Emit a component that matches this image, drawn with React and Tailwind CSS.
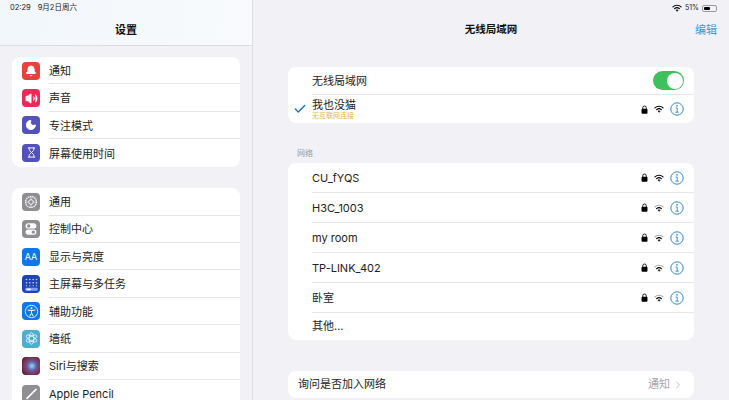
import { Bell, Volume2, Moon, Hourglass, Check, ChevronRight } from 'lucide-react'

const font = "font-['Inter','Noto_Sans_CJK_SC',sans-serif]"

function Wifi({ dim = false }) {
  return (
    <svg viewBox="0 0 16 12" className="w-[10px] h-[8px] text-black" fill="none" stroke="currentColor" strokeLinecap="round">
      <path d="M1.5 4.2a9.5 9.5 0 0 1 13 0" strokeWidth="1.9" opacity={dim ? 0.35 : 1} />
      <path d="M4.2 7a5.6 5.6 0 0 1 7.6 0" strokeWidth="1.9" />
      <path d="M8 11.2 6.3 9.4a2.4 2.4 0 0 1 3.4 0Z" fill="currentColor" strokeWidth="0.6" />
    </svg>
  )
}

function LockIcon() {
  return (
    <svg viewBox="0 0 8 10" className="w-[7px] h-[9px]">
      <path d="M2 4.5V3a2 2 0 0 1 4 0v1.5" fill="none" stroke="black" strokeWidth="1" />
      <rect x="0.6" y="4.2" width="6.8" height="5.6" rx="1" fill="black" />
    </svg>
  )
}

function InfoIcon() {
  return (
    <svg viewBox="0 0 14 14" className="w-[14px] h-[14px]" fill="none" stroke="#2f88c8">
      <circle cx="7" cy="7" r="6.2" strokeWidth="1" />
      <circle cx="7" cy="3.9" r="0.8" fill="#2f88c8" stroke="none" />
      <path d="M5.6 6h1.6v4M5.4 10.2h3.4" strokeWidth="0.9" />
    </svg>
  )
}

function GearIcon() {
  return (
    <svg viewBox="0 0 18 18" className="w-[14px] h-[14px]" fill="none" stroke="white">
      <circle cx="9" cy="9" r="7" strokeWidth="1.6" strokeDasharray="2 0.8" />
      <circle cx="9" cy="9" r="3" strokeWidth="1.2" />
      <path d="M9 2.5V6M9 12v3.5M2.5 9H6M12 9h3.5" strokeWidth="0.8" />
    </svg>
  )
}

function ToggleIcon() {
  return (
    <svg viewBox="0 0 18 18" className="w-[14px] h-[14px]">
      <rect x="2" y="1.5" width="14" height="7" rx="3.5" fill="white" />
      <circle cx="6" cy="5" r="2.2" fill="#8e8e93" />
      <rect x="2" y="9.5" width="14" height="7" rx="3.5" fill="white" />
      <circle cx="12" cy="13" r="2.2" fill="#8e8e93" />
    </svg>
  )
}

function GridIcon() {
  return (
    <svg viewBox="0 0 18 18" className="w-[15px] h-[15px]" fill="#c7d6fb">
      {[3, 7, 11, 15].map((x) => [3, 7].map((y) => <circle key={`${x}-${y}`} cx={x} cy={y} r="1" />))}
      {[3, 7, 11, 15].map((x) => <circle key={x} cx={x} cy="10.5" r="0.9" opacity="0.7" />)}
      <rect x="1.5" y="13" width="15" height="3.6" rx="1.2" fill="#7f9df0" />
      <rect x="3" y="13.8" width="5" height="2" rx="0.6" fill="white" />
    </svg>
  )
}

function AccessIcon() {
  return (
    <svg viewBox="0 0 18 18" className="w-[15px] h-[15px]" fill="none" stroke="white">
      <circle cx="9" cy="9" r="7.5" strokeWidth="1" />
      <circle cx="9" cy="5" r="1.2" fill="white" stroke="none" />
      <path d="M4.8 7.2 9 8l4.2-.8M9 8v3l-2 3.4M9 11l2 3.4" strokeWidth="1.2" strokeLinecap="round" />
    </svg>
  )
}

function FlowerIcon() {
  return (
    <svg viewBox="0 0 18 18" className="w-[15px] h-[15px]" fill="none" stroke="white" strokeWidth="0.9">
      <ellipse cx="9" cy="9" rx="2.8" ry="7" />
      <ellipse cx="9" cy="9" rx="2.8" ry="7" transform="rotate(60 9 9)" />
      <ellipse cx="9" cy="9" rx="2.8" ry="7" transform="rotate(120 9 9)" />
    </svg>
  )
}

function PencilIcon() {
  return (
    <svg viewBox="0 0 18 18" className="w-[15px] h-[15px]" fill="none" stroke="white" strokeWidth="2">
      <path d="M3 15.5 15 3.5" />
    </svg>
  )
}

const group1 = [
  { name: '通知', bg: 'bg-[#e8403a]', icon: <Bell className="w-[12px] h-[12px] text-white" fill="white" /> },
  { name: '声音', bg: 'bg-[#ea2a57]', icon: <Volume2 className="w-[13px] h-[13px] text-white" fill="white" /> },
  { name: '专注模式', bg: 'bg-[#5352bd]', icon: <Moon className="w-[12px] h-[12px] text-white" fill="white" /> },
  { name: '屏幕使用时间', bg: 'bg-[#5352bd]', icon: <Hourglass className="w-[11px] h-[11px] text-white" /> },
]

const group2 = [
  { name: '通用', bg: 'bg-[#8e8e93]', icon: <GearIcon /> },
  { name: '控制中心', bg: 'bg-[#8e8e93]', icon: <ToggleIcon /> },
  { name: '显示与亮度', bg: 'bg-[#0f78e8]', icon: <span className="text-white text-[9px] leading-none">AA</span> },
  { name: '主屏幕与多任务', bg: 'bg-[#1f45b5]', icon: <GridIcon /> },
  { name: '辅助功能', bg: 'bg-[#0f78e8]', icon: <AccessIcon /> },
  { name: '墙纸', bg: 'bg-[#4eaed0]', icon: <FlowerIcon /> },
  { name: 'Siri与搜索', bg: 'bg-[radial-gradient(circle_at_55%_50%,#9fd8ea_0%,#5a5fa8_35%,#8b2f52_62%,#12202a_100%)]', icon: null },
  { name: 'Apple Pencil', bg: 'bg-[#8e8e93]', icon: <PencilIcon /> },
]

function SettingRow({ item, last }) {
  return (
    <div className="flex items-center h-[27.4px] pl-[10px] shrink-0">
      <div className={`w-[18px] h-[18px] rounded-[4px] flex items-center justify-center shrink-0 ${item.bg}`}>
        {item.icon}
      </div>
      <div className={`ml-[9px] flex-1 h-full flex items-center pt-[2px] text-[11px] text-[#222] ${last ? '' : 'border-b border-[#e6e6ea]'}`}>
        <span>{item.name}</span>
      </div>
    </div>
  )
}

function NetIcons({ dim = true }) {
  return (
    <div className="flex items-center">
      <LockIcon />
      <span className="ml-[6px] flex">
        <Wifi dim={dim} />
      </span>
      <span className="ml-[6px] flex">
        <InfoIcon />
      </span>
    </div>
  )
}

function NetworkRow({ name, dim }) {
  return (
    <div className="h-[30px] pl-[24px] shrink-0">
      <div className="h-full flex items-center border-b border-[#e6e6ea] pr-[10px] text-[11px] text-[#222]">
        <span className="flex-1 pt-[1px]">{name}</span>
        <NetIcons dim={dim} />
      </div>
    </div>
  )
}

export default function App() {
  return (
    <div className={`w-[729px] h-[400px] overflow-hidden flex bg-[#f1f1f6] ${font}`}>
      {/* Sidebar */}
      <aside className="w-[253px] shrink-0 h-full flex flex-col border-r border-[#dfdfe3] bg-[#f1f1f6]">
        <header className="h-[46px] shrink-0 border-b border-[#dcdce0] bg-[linear-gradient(100deg,#f2f7fb,#f8fafc)] pl-[10px]">
          <div className="h-[15px] flex items-center text-[7.5px] text-[#222] gap-[7px] pt-[1px]">
            <span>02:29</span>
            <span>9月2日周六</span>
          </div>
          <div className="h-[30px] flex items-center justify-center pr-[10px] text-[11px] font-semibold text-[#111]">设置</div>
        </header>

        <div className="flex-1 overflow-hidden pl-[12px] pr-[12px] pt-[11px] flex flex-col gap-[21.6px]">
          <div className="bg-white rounded-[8px] overflow-hidden shrink-0">
            {group1.map((item, i) => (
              <SettingRow key={item.name} item={item} last={i === group1.length - 1} />
            ))}
          </div>
          <div className="bg-white rounded-[8px] overflow-hidden shrink-0">
            {group2.map((item) => (
              <SettingRow key={item.name} item={item} />
            ))}
          </div>
        </div>
      </aside>

      {/* Detail */}
      <main className="flex-1 min-w-0 h-full flex flex-col">
        <header className="shrink-0 h-[46px] pr-[12px]">
          <div className="h-[15px] flex items-center justify-end gap-[3px] text-[7px] text-[#222] pt-[1px]">
            <Wifi />
            <span>51%</span>
            <div className="w-[15px] h-[7px] rounded-[2px] border border-[#999] p-[1px] flex">
              <div className="w-[6px] bg-black rounded-[1px]" />
            </div>
          </div>
          <div className="h-[30px] relative flex items-center justify-center text-[11px] font-semibold text-[#111]">
            <span className="pl-[12px] text-[10.5px]">无线局域网</span>
            <span className="absolute right-0 font-normal text-[#3d96d6]">编辑</span>
          </div>
        </header>

        <div className="flex-1 overflow-hidden pl-[35px] pr-[35px] pt-[21px]">
          <section className="bg-white rounded-[8px] overflow-hidden">
            <div className="h-[28px] pl-[24px]">
              <div className="h-full flex items-center justify-between border-b border-[#e6e6ea] pr-[10px] text-[11px] text-[#222]">
                <span className="pt-[1px]">无线局域网</span>
                <div className="w-[31px] h-[19px] rounded-full bg-[#3fc05f] p-[1.5px] flex justify-end">
                  <div className="w-[16px] h-[16px] rounded-full bg-white" />
                </div>
              </div>
            </div>
            <div className="h-[28px] flex items-center pr-[10px]">
              <div className="w-[24px] flex justify-center shrink-0">
                <Check className="w-[14px] h-[14px] text-[#1f7ac4]" strokeWidth={2.5} />
              </div>
              <div className="flex-1 flex flex-col">
                <span className="text-[11px] leading-[13px] text-[#222]">我也没猫</span>
                <span className="text-[7px] leading-[8px] text-[#e3b54a]">无互联网连接</span>
              </div>
              <NetIcons dim={false} />
            </div>
          </section>

          <div className="h-[40px] pl-[9px] pb-[4px] flex items-end text-[8px] text-[#9a9a9f]">网络</div>

          <section className="bg-white rounded-[8px] overflow-hidden flex flex-col">
            <NetworkRow name="CU_fYQS" dim={false} />
            <NetworkRow name="H3C_1003" dim />
            <NetworkRow name="my room" dim />
            <NetworkRow name="TP-LINK_402" dim />
            <NetworkRow name="卧室" dim />
            <div className="h-[27px] pl-[24px] flex items-center text-[11px] text-[#222]">其他...</div>
          </section>

          <section className="mt-[31px] h-[27px] bg-white rounded-[8px] flex items-center pl-[10px] pr-[10px] text-[11px] text-[#222]">
            <span className="flex-1">询问是否加入网络</span>
            <span className="text-[#a5a5aa]">通知</span>
            <ChevronRight className="ml-[2px] w-[12px] h-[12px] text-[#c4c4c8]" />
          </section>
        </div>
      </main>
    </div>
  )
}
